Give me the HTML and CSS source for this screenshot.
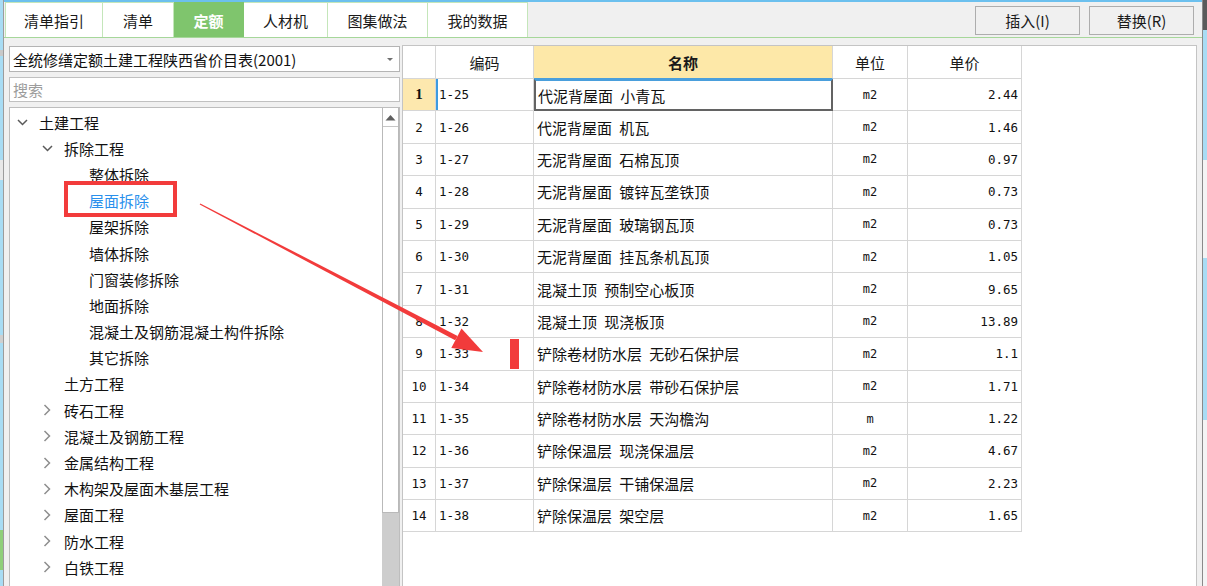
FILE: index.html
```html
<!DOCTYPE html>
<html lang="zh-CN">
<head>
<meta charset="utf-8">
<title>定额</title>
<link rel="stylesheet" href="styles.css">
</head>
<body>
<div class="screen">
  <div class="desk desk-left">
    <span class="dblk dblk-a"></span>
    <span class="dblk dblk-b"></span>
    <span class="dblk dblk-c"></span>
    <span class="dblk dblk-g"></span>
  </div>

  <div class="window">
    <div class="topbar">
      <div class="tabs">
        <div class="tab tab-first">清单指引</div>
        <div class="tab tab-qd">清单</div>
        <div class="tab tab-de active">定额</div>
        <div class="tab tab-rcj">人材机</div>
        <div class="tab tab-wide">图集做法</div>
        <div class="tab tab-wide">我的数据</div>
      </div>
      <div class="actions">
        <button class="btn">插入(I)</button>
        <button class="btn">替换(R)</button>
      </div>
    </div>

    <div class="main">
      <div class="left">
        <div class="select">
          <span class="select-text">全统修缮定额土建工程陕西省价目表(2001)</span>
          <span class="caret"></span>
        </div>
        <div class="search">搜索</div>
        <div class="tree">
          <div class="tree-list">
            <div class="node l0"><span class="tw"><svg width="11" height="7" viewBox="0 0 11 7"><polyline points="1,1 5.5,5.5 10,1" class="chev-d"/></svg></span><span class="label">土建工程</span></div>
            <div class="node l1"><span class="tw"><svg width="11" height="7" viewBox="0 0 11 7"><polyline points="1,1 5.5,5.5 10,1" class="chev-d"/></svg></span><span class="label">拆除工程</span></div>
            <div class="node l2"><span class="tw"></span><span class="label">整体拆除</span></div>
            <div class="node l2"><span class="tw"></span><span class="label sel">屋面拆除</span></div>
            <div class="node l2"><span class="tw"></span><span class="label">屋架拆除</span></div>
            <div class="node l2"><span class="tw"></span><span class="label">墙体拆除</span></div>
            <div class="node l2"><span class="tw"></span><span class="label">门窗装修拆除</span></div>
            <div class="node l2"><span class="tw"></span><span class="label">地面拆除</span></div>
            <div class="node l2"><span class="tw"></span><span class="label">混凝土及钢筋混凝土构件拆除</span></div>
            <div class="node l2"><span class="tw"></span><span class="label">其它拆除</span></div>
            <div class="node l1"><span class="tw"></span><span class="label">土方工程</span></div>
            <div class="node l1"><span class="tw"><svg width="8" height="12" viewBox="0 0 8 12"><polyline points="1.5,1 6.5,6 1.5,11" class="chev-r"/></svg></span><span class="label">砖石工程</span></div>
            <div class="node l1"><span class="tw"><svg width="8" height="12" viewBox="0 0 8 12"><polyline points="1.5,1 6.5,6 1.5,11" class="chev-r"/></svg></span><span class="label">混凝土及钢筋工程</span></div>
            <div class="node l1"><span class="tw"><svg width="8" height="12" viewBox="0 0 8 12"><polyline points="1.5,1 6.5,6 1.5,11" class="chev-r"/></svg></span><span class="label">金属结构工程</span></div>
            <div class="node l1"><span class="tw"><svg width="8" height="12" viewBox="0 0 8 12"><polyline points="1.5,1 6.5,6 1.5,11" class="chev-r"/></svg></span><span class="label">木构架及屋面木基层工程</span></div>
            <div class="node l1"><span class="tw"><svg width="8" height="12" viewBox="0 0 8 12"><polyline points="1.5,1 6.5,6 1.5,11" class="chev-r"/></svg></span><span class="label">屋面工程</span></div>
            <div class="node l1"><span class="tw"><svg width="8" height="12" viewBox="0 0 8 12"><polyline points="1.5,1 6.5,6 1.5,11" class="chev-r"/></svg></span><span class="label">防水工程</span></div>
            <div class="node l1"><span class="tw"><svg width="8" height="12" viewBox="0 0 8 12"><polyline points="1.5,1 6.5,6 1.5,11" class="chev-r"/></svg></span><span class="label">白铁工程</span></div>
          </div>
          <div class="vscroll">
            <div class="sb-box">
              <div class="sb-up"><svg width="11" height="7" viewBox="0 0 11 7"><polygon points="0.5,6.5 5.5,1 10.5,6.5" fill="#5f5f5f"/></svg></div>
            </div>
            <div class="sb-track"></div>
          </div>
        </div>
      </div>

      <div class="gridpanel">
        <div class="grid">
          <div class="c hd rn"></div>
          <div class="c hd">编码</div>
          <div class="c hd hd-name">名称</div>
          <div class="c hd">单位</div>
          <div class="c hd">单价</div>

          <div class="c rn rn-cur">1</div>
          <div class="c code code-cur">1-25</div>
          <div class="c name name-cur">代泥背屋面 小青瓦</div>
          <div class="c unit">m2</div>
          <div class="c price">2.44</div>

          <div class="c rn">2</div><div class="c code">1-26</div><div class="c name">代泥背屋面 机瓦</div><div class="c unit">m2</div><div class="c price">1.46</div>
          <div class="c rn">3</div><div class="c code">1-27</div><div class="c name">无泥背屋面 石棉瓦顶</div><div class="c unit">m2</div><div class="c price">0.97</div>
          <div class="c rn">4</div><div class="c code">1-28</div><div class="c name">无泥背屋面 镀锌瓦垄铁顶</div><div class="c unit">m2</div><div class="c price">0.73</div>
          <div class="c rn">5</div><div class="c code">1-29</div><div class="c name">无泥背屋面 玻璃钢瓦顶</div><div class="c unit">m2</div><div class="c price">0.73</div>
          <div class="c rn">6</div><div class="c code">1-30</div><div class="c name">无泥背屋面 挂瓦条机瓦顶</div><div class="c unit">m2</div><div class="c price">1.05</div>
          <div class="c rn">7</div><div class="c code">1-31</div><div class="c name">混凝土顶 预制空心板顶</div><div class="c unit">m2</div><div class="c price">9.65</div>
          <div class="c rn">8</div><div class="c code">1-32</div><div class="c name">混凝土顶 现浇板顶</div><div class="c unit">m2</div><div class="c price">13.89</div>
          <div class="c rn">9</div><div class="c code">1-33</div><div class="c name">铲除卷材防水层 无砂石保护层</div><div class="c unit">m2</div><div class="c price">1.1</div>
          <div class="c rn">10</div><div class="c code">1-34</div><div class="c name">铲除卷材防水层 带砂石保护层</div><div class="c unit">m2</div><div class="c price">1.71</div>
          <div class="c rn">11</div><div class="c code">1-35</div><div class="c name">铲除卷材防水层 天沟檐沟</div><div class="c unit">m</div><div class="c price">1.22</div>
          <div class="c rn">12</div><div class="c code">1-36</div><div class="c name">铲除保温层 现浇保温层</div><div class="c unit">m2</div><div class="c price">4.67</div>
          <div class="c rn">13</div><div class="c code">1-37</div><div class="c name">铲除保温层 干铺保温层</div><div class="c unit">m2</div><div class="c price">2.23</div>
          <div class="c rn">14</div><div class="c code">1-38</div><div class="c name">铲除保温层 架空层</div><div class="c unit">m2</div><div class="c price">1.65</div>
        </div>
      </div>
    </div>
  </div>

  <div class="desk desk-right">
    <span class="dblk rblk-top"></span>
    <span class="dblk rblk-w1"></span>
    <span class="dblk rblk-w2"></span>
  </div>

  <svg class="annot" width="1207" height="586" viewBox="0 0 1207 586">
    <rect x="66" y="183" width="109" height="32" fill="none" stroke="#f23b3b" stroke-width="4"/>
    <polygon points="199.7,204.5 200.3,203.5 457.6,335.9 455.2,340.3" fill="#f23b3b"/>
    <polygon points="483,352 451.3,347.9 461.5,328.4" fill="#f23b3b"/>
    <rect x="510" y="339" width="9" height="30" fill="#f23b3b"/>
  </svg>
</div>
</body>
</html>
```

FILE: styles.css
```css
* { box-sizing: border-box; }

html, body {
  margin: 0;
  padding: 0;
}

body {
  width: 1207px;
  height: 586px;
  overflow: hidden;
  background: #f0f0f0;
  font-family: "Noto Sans CJK SC", "Liberation Sans", sans-serif;
  font-size: 15px;
  color: #111;
}

.screen {
  position: relative;
  display: flex;
  width: 1207px;
  height: 586px;
}

/* desktop slivers at the edges */
.desk {
  position: relative;
  background: #a8dcf4;
  overflow: hidden;
}
.desk-left {
  width: 4px;
  border-right: 1px solid #9c9c9c;
}
.desk-right {
  width: 5px;
  border-left: 1px solid #8a8a8a;
}
.dblk { position: absolute; left: 0; right: 0; display: block; }
.dblk-a { top: 50px; height: 6px; background: #c8c8c8; }
.dblk-b { top: 160px; height: 20px; background: #e8e8e8; }
.dblk-c { top: 335px; height: 8px; background: #cfcfcf; }
.dblk-g { top: 530px; height: 40px; background: #8fcf7a; }
.rblk-top { top: 0; height: 30px; background: #5a5a5a; }
.rblk-w1 { top: 160px; height: 98px; background: #f4f4f4; }
.rblk-w2 { top: 420px; height: 166px; background: #f4f4f4; }

/* window */
.window {
  flex: 1;
  min-width: 0;
  display: flex;
  flex-direction: column;
  background: #f0f0f0;
  border-top: 2px solid #6cc0ee;
}

.topbar {
  height: 36px;
  display: flex;
  border-bottom: 1px solid #a6d79a;
}

.tabs {
  display: flex;
  margin-left: 1px;
}

.tab {
  height: 35px;
  display: flex;
  align-items: center;
  justify-content: center;
  background: #fff;
  border-top: 1px solid #c4e6ba;
  border-right: 1px solid #c4e6ba;
  color: #1a1a1a;
}
.tab-first { width: 98px; border-left: 1px solid #c4e6ba; }
.tab-qd { width: 71px; }
.tab-de { width: 70px; }
.tab-rcj { width: 84px; }
.tab-wide { width: 100px; }

.tab.active {
  background: #7fc56d;
  border-color: #7fc56d;
  color: #fff;
  font-weight: bold;
}

.actions {
  margin-left: auto;
  margin-right: 8px;
  display: flex;
  gap: 9px;
  padding-top: 4px;
}

.btn {
  width: 105px;
  height: 29px;
  background: #f0f0f0;
  border: 1px solid #adadad;
  font-family: "Noto Sans CJK SC", "Liberation Sans", sans-serif;
  font-size: 15px;
  color: #1a1a1a;
  padding: 0;
}

/* main split */
.main {
  flex: 1;
  min-height: 0;
  display: flex;
  gap: 2px;
  padding: 0 5px;
}

.left {
  width: 391px;
  display: flex;
  flex-direction: column;
  padding-top: 8px;
}

.select {
  height: 26px;
  background: #fff;
  border: 1px solid #b4b4b4;
  display: flex;
  align-items: center;
  padding-left: 3px;
  padding-right: 6px;
}
.select-text { flex: 1; white-space: nowrap; }
.caret {
  width: 0;
  height: 0;
  border-left: 3px solid transparent;
  border-right: 3px solid transparent;
  border-top: 3px solid #707070;
}

.search {
  margin-top: 5px;
  height: 25px;
  background: #fff;
  border: 1px solid #c0c0c0;
  color: #9c9c9c;
  display: flex;
  align-items: center;
  padding-left: 3px;
}

.tree {
  margin-top: 5px;
  flex: 1;
  min-height: 0;
  background: #fff;
  border: 1px solid #bdbdbd;
  border-bottom: none;
  display: flex;
}

.tree-list {
  flex: 1;
  padding-top: 1px;
}

.node {
  height: 26.2px;
  display: flex;
  align-items: center;
  white-space: nowrap;
}
.l0 { padding-left: 0; }
.l1 { padding-left: 25px; }
.l2 { padding-left: 50px; }

.tw {
  width: 24px;
  height: 100%;
  display: flex;
  align-items: center;
  justify-content: center;
}
.chev-d {
  fill: none;
  stroke: #5a5a5a;
  stroke-width: 1.5;
}
.chev-r {
  fill: none;
  stroke: #8e8e8e;
  stroke-width: 1.5;
}

.label { margin-left: 5px; }
.label.sel { color: #2a90ec; }

.vscroll {
  width: 17px;
  display: flex;
  flex-direction: column;
}
.sb-box {
  height: 405px;
  background: #fff;
  border: 1px solid #b9b9b9;
  border-top: none;
}
.sb-up {
  height: 19px;
  border-bottom: 1px solid #c6c6c6;
  display: flex;
  align-items: center;
  justify-content: center;
}
.sb-track {
  flex: 1;
  background: #cdcdcd;
}

/* grid */
.gridpanel {
  flex: 1;
  margin-top: 7px;
  background: #fff;
  border: 1px solid #c4c4c4;
  border-bottom: none;
}

.grid {
  display: grid;
  grid-template-columns: 33px 98px 299px 75px 114px;
  grid-template-rows: 33px repeat(14, 32.4px);
  width: 619px;
}

.c {
  display: flex;
  align-items: center;
  border-right: 1px solid #d6d6d6;
  border-bottom: 1px solid #d6d6d6;
  white-space: pre;
  overflow: hidden;
}

.hd {
  justify-content: center;
  color: #1a1a1a;
}
.hd-name {
  background: #fde8a8;
  font-weight: bold;
  border-bottom-color: #4a9fdc;
}

.rn {
  justify-content: center;
  font-family: "DejaVu Sans Mono", "Liberation Mono", monospace;
  font-size: 12.5px;
}
.rn-cur {
  background: #fde8ae;
  font-weight: bold;
  font-family: "Liberation Serif", serif;
  font-size: 15px;
}

.code {
  padding-left: 3px;
  font-family: "DejaVu Sans Mono", "Liberation Mono", monospace;
  font-size: 12.5px;
}
.code-cur {
  box-shadow: inset 2px 0 0 #3d9be0;
}

.name {
  padding-left: 3px;
  word-spacing: 4px;
}
.name-cur {
  border: 2px solid #636363;
  border-top-color: #4a9fdc;
  padding-left: 2px;
}

.unit {
  justify-content: center;
  font-family: "DejaVu Sans Mono", "Liberation Mono", monospace;
  font-size: 12px;
}

.price {
  justify-content: flex-end;
  padding-right: 3px;
  font-family: "DejaVu Sans Mono", "Liberation Mono", monospace;
  font-size: 12.5px;
}

/* annotation overlay */
.annot {
  position: absolute;
  left: 0;
  top: 0;
  pointer-events: none;
}
```
